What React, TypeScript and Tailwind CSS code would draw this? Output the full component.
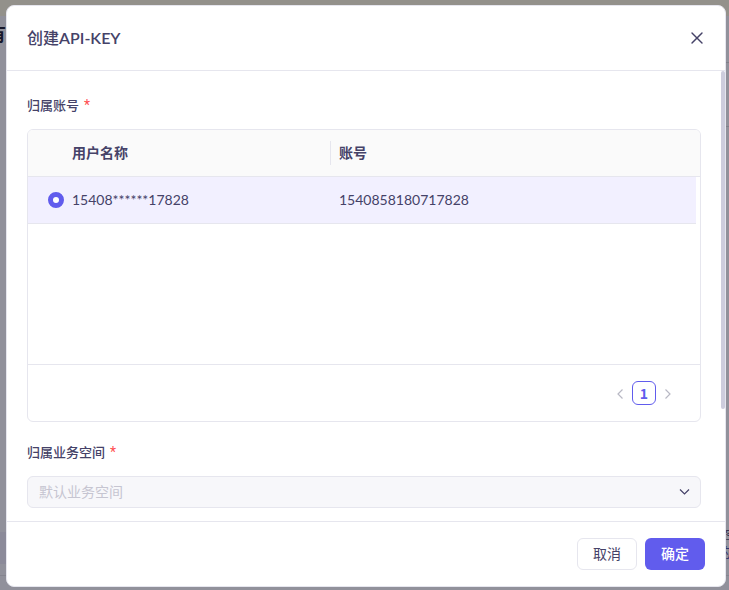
import { X } from 'lucide-react';
import type { ReactNode } from 'react';

function FieldLabel({ htmlFor, id, children }: { htmlFor?: string; id?: string; children: ReactNode }) {
  return (
    <label htmlFor={htmlFor} id={id} className="mb-3.5 flex h-5 items-center gap-1 text-[13px] font-medium leading-5">
      {children}
      <span className="pl-px font-['Roboto',sans-serif] text-sm font-normal leading-5 text-[#ff4d4f]">*</span>
    </label>
  );
}

function Chevron({ path }: { path: string }) {
  return (
    <svg viewBox="0 0 16 16" className="size-4 shrink-0" fill="none" stroke="currentColor" strokeWidth="1.2" aria-hidden="true">
      <path d={path} />
    </svg>
  );
}

function PageBehind() {
  return (
    <div aria-hidden="true" className="absolute inset-0 overflow-hidden bg-[#91919b]">
      <div className="h-4 bg-[#93918b]" />
      <span className="absolute -left-3 top-[22px] text-[18px] font-bold leading-6 text-[#17172a]">有</span>
      <div className="absolute left-0 top-[532px] h-8 w-2 bg-[#8b8a99]" />
      <div className="absolute left-0 top-[575px] h-px w-full bg-[#85858f]" />
      <div className="absolute right-0 top-[62px] h-px w-1 bg-[#80808a]" />
      <div className="absolute right-0 top-[126px] h-px w-1 bg-[#80808a]" />
      <span className="absolute left-[725px] top-[524px] text-[13px] leading-5 text-[#34344f]">空</span>
      <span className="absolute left-[718px] top-[542px] text-[13px] leading-5 text-[#34346b]">的</span>
    </div>
  );
}

function AccountTable() {
  return (
    <div className="overflow-hidden rounded-md border border-[#e6e6ee]" aria-labelledby="account-label" role="group">
      <div className="h-[234px]">
        <table className="w-full table-fixed border-separate border-spacing-0 text-left text-sm">
          <colgroup>
            <col className="w-9" />
            <col className="w-[267px]" />
            <col />
            <col className="w-1" />
          </colgroup>
          <thead>
            <tr className="h-[47px] bg-[#fafafa]">
              <th className="border-b border-[#e6e6ee] p-0" />
              <th className="border-b border-[#e6e6ee] py-0 pl-2 pr-0 font-bold">
                <div className="flex h-6 items-center border-r border-[#e6e6ee]">用户名称</div>
              </th>
              <th className="border-b border-[#e6e6ee] px-2 py-0 font-bold">账号</th>
              <th className="border-b border-[#e6e6ee] p-0" />
            </tr>
          </thead>
          <tbody>
            <tr className="h-[47px]">
              <td className="border-b border-[#e6e6ee] bg-[#f2f0ff] py-0 pl-5 pr-0">
                <input
                  type="radio"
                  name="account"
                  aria-label="15408******17828"
                  defaultChecked
                  className="block size-4 appearance-none rounded-full border-[5px] border-[#615ced] bg-white"
                />
              </td>
              <td className="border-b border-[#e6e6ee] bg-[#f2f0ff] px-2 py-0">15408******17828</td>
              <td className="border-b border-[#e6e6ee] bg-[#f2f0ff] px-2 py-0">1540858180717828</td>
              <td className="p-0" />
            </tr>
          </tbody>
        </table>
      </div>
      <nav className="flex h-[57px] items-center justify-end gap-1 border-t border-[#e6e6ee] pr-6" aria-label="pagination">
        <button type="button" disabled aria-label="上一页" className="flex h-6 w-4 items-center justify-center text-[#b8b8c4]">
          <Chevron path="M10.5 4.5 6 9l4.5 4.5" />
        </button>
        <button type="button" className="size-6 rounded-md border border-[#615ced] font-['Noto_Sans_CJK_SC',sans-serif] text-sm font-bold leading-5 text-[#615ced]">
          1
        </button>
        <button type="button" disabled aria-label="下一页" className="flex h-6 w-4 items-center justify-center text-[#b8b8c4]">
          <Chevron path="M5.5 4.5 10 9l-4.5 4.5" />
        </button>
      </nav>
    </div>
  );
}

export default function App() {
  return (
    <div className="relative h-screen font-['Lato','Noto_Sans_CJK_SC',sans-serif] text-[#454268]">
      <PageBehind />
      <div className="relative flex h-full pb-[3px] pl-[6px] pr-[3px] pt-[5px]">
        <section
          role="dialog"
          aria-modal="true"
          aria-labelledby="dialog-title"
          className="flex min-w-0 flex-1 flex-col overflow-hidden rounded-lg border border-[#e6e6ee] bg-white"
        >
          <header className="flex h-[65px] shrink-0 items-center justify-between border-b border-[#e6e6ee] px-5">
            <h1 id="dialog-title" className="text-base font-semibold leading-6">
              <span className="font-medium">创建</span>API-KEY
            </h1>
            <button type="button" aria-label="关闭" className="flex size-4 items-center justify-center">
              <X size={20} strokeWidth={1.7} className="shrink-0" />
            </button>
          </header>
          <div className="flex min-h-0 flex-1">
            <form className="min-w-0 flex-1 overflow-hidden px-5 pt-6">
              <FieldLabel id="account-label">归属账号</FieldLabel>
              <AccountTable />
              <div className="mt-5">
                <FieldLabel htmlFor="workspace">归属业务空间</FieldLabel>
                <div className="grid items-center">
                  <select
                    id="workspace"
                    disabled
                    className="col-start-1 row-start-1 h-8 w-full appearance-none rounded-md border border-[#e6e6ee] bg-[#f7f7fa] px-[11px] text-sm text-[#c6c5d1] opacity-100"
                  >
                    <option>默认业务空间</option>
                  </select>
                  <span className="pointer-events-none col-start-1 row-start-1 mr-2 justify-self-end">
                    <Chevron path="M3 5.5 7.5 10l4.5-4.5" />
                  </span>
                </div>
              </div>
            </form>
            <div className="w-1">
              <div className="h-3/4 rounded-full bg-[#cdcddd]" />
            </div>
          </div>
          <footer className="flex h-[65px] shrink-0 items-center justify-end gap-2 border-t border-[#e6e6ee] px-5">
            <button type="button" className="h-8 w-[60px] rounded-md border border-[#e6e6ee] bg-white text-sm">取消</button>
            <button type="button" className="h-8 w-[60px] rounded-md bg-[#615ced] text-sm font-medium text-white">确定</button>
          </footer>
        </section>
      </div>
    </div>
  );
}
